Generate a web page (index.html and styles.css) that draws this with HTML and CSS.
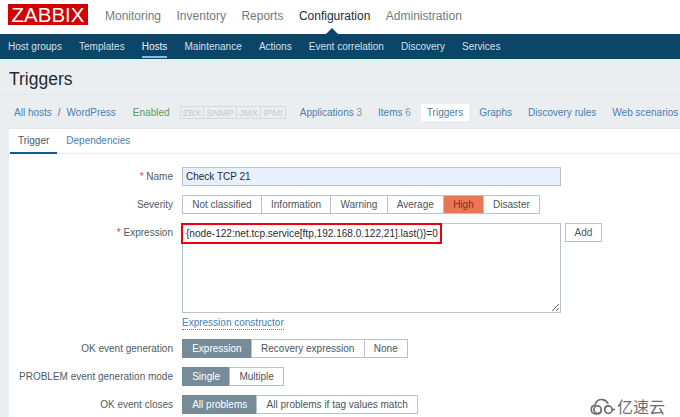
FILE: index.html
```html
<!DOCTYPE html>
<html lang="en">
<head>
    <meta charset="UTF-8">
    <meta name="viewport" content="width=device-width, initial-scale=1.0">
    <title>Triggers</title>
    <link rel="stylesheet" href="styles.css">
</head>
<body>
    <header class="top-nav">
        <div class="logo">ZABBIX</div>
        <a>Monitoring</a>
        <a>Inventory</a>
        <a>Reports</a>
        <a class="current">Configuration</a>
        <a>Administration</a>
    </header>
    <nav class="sub-nav">
        <a>Host groups</a>
        <a>Templates</a>
        <a class="current">Hosts</a>
        <a>Maintenance</a>
        <a>Actions</a>
        <a>Event correlation</a>
        <a>Discovery</a>
        <a>Services</a>
    </nav>
    <main class="page">
        <h1>Triggers</h1>
        <div class="host-bar">
            <a>All hosts</a>
            <span class="slash">/</span>
            <a>WordPress</a>
            <span class="enabled">Enabled</span>
            <div class="tags">
                <span>ZBX</span><span>SNMP</span><span>JMX</span><span>IPMI</span>
            </div>
            <ul class="host-tabs">
                <li><a>Applications</a> <span class="count">3</span></li>
                <li><a>Items</a> <span class="count">6</span></li>
                <li class="active"><a>Triggers</a></li>
                <li><a>Graphs</a></li>
                <li><a>Discovery rules</a></li>
                <li><a>Web scenarios</a></li>
            </ul>
        </div>
        <section class="card">
            <div class="tabs">
                <a class="active">Trigger</a>
                <a>Dependencies</a>
            </div>
            <form class="form">
                <div class="row">
                    <label><span class="req">*</span> Name</label>
                    <input class="text-input" type="text" value="Check TCP 21">
                </div>
                <div class="row">
                    <label>Severity</label>
                    <div class="segments">
                        <span>Not classified</span><span>Information</span><span>Warning</span><span>Average</span><span class="high">High</span><span>Disaster</span>
                    </div>
                </div>
                <div class="row row-expr">
                    <label><span class="req">*</span> Expression</label>
                    <div class="expr-box">
                        <textarea readonly>{node-122:net.tcp.service[ftp,192.168.0.122,21].last()}=0</textarea>
                        <div class="red-mark"></div>
                    </div>
                    <button type="button" class="add">Add</button>
                </div>
                <div class="row row-link">
                    <label></label>
                    <a class="dotted">Expression constructor</a>
                </div>
                <div class="row">
                    <label>OK event generation</label>
                    <div class="segments">
                        <span class="on">Expression</span><span>Recovery expression</span><span>None</span>
                    </div>
                </div>
                <div class="row">
                    <label>PROBLEM event generation mode</label>
                    <div class="segments">
                        <span class="on">Single</span><span>Multiple</span>
                    </div>
                </div>
                <div class="row">
                    <label>OK event closes</label>
                    <div class="segments">
                        <span class="on">All problems</span><span>All problems if tag values match</span>
                    </div>
                </div>
            </form>
        </section>
    </main>
    <div class="watermark">
        <svg width="26" height="17" viewBox="0 0 26 17" fill="none" stroke="#6f6f6f" stroke-width="1.7">
            <path d="M7 16H5.5a4.5 4.5 0 0 1-.6-8.9C5.6 3.2 9 1 12.6 1.6c2.6.4 4.6 2 5.5 4.2"/>
            <circle cx="7.6" cy="11.6" r="3.7"/>
            <circle cx="18.4" cy="11.6" r="3.7"/>
            <path d="M11.2 11.6c0 1.4 0 4.4-3.6 4.4M14.7 11.6c0-2.4 1.5-3.7 3.7-3.7M22 11.6c1 0 3-.2 3-.2"/>
        </svg>
        <span>亿速云</span>
    </div>
</body>
</html>
```

FILE: styles.css
```css
html, body {
    margin: 0;
    padding: 0;
    height: 100%;
    overflow: hidden;
}
body {
    font-family: "Liberation Sans", Arial, sans-serif;
    font-size: 10px;
    background-color: #ebeef0;
    color: #1f2c33;
}
a {
    color: #4680b0;
    text-decoration: none;
}

/* top menu */
.top-nav {
    height: 34px;
    background-color: white;
    display: flex;
    align-items: flex-start;
    gap: 15.5px;
    padding-left: 8px;
    box-sizing: border-box;
}
.top-nav a {
    font-size: 12px;
    line-height: 32px;
    color: #6f7b82;
    white-space: nowrap;
}
.top-nav a.current {
    color: #1f2c33;
    position: relative;
}
.top-nav a.current::after {
    content: "";
    position: absolute;
    left: 27px;
    bottom: -2px;
    border-left: 6px solid transparent;
    border-right: 6px solid transparent;
    border-bottom: 6px solid #0a466a;
}
.logo {
    width: 80px;
    height: 21px;
    margin: 4px 1.5px 0 0;
    background-color: #d40000;
    color: white;
    font-size: 20.5px;
    line-height: 21px;
    text-align: center;
}

/* second menu */
.sub-nav {
    height: 25px;
    background-color: #0a466a;
    display: flex;
    gap: 17.15px;
    padding-left: 8px;
    box-sizing: border-box;
}
.sub-nav a {
    line-height: 25px;
    height: 24px;
    color: #d3e0e8;
    box-sizing: border-box;
    white-space: nowrap;
}
.sub-nav a.current {
    color: #eef4f8;
    border-bottom: 2px solid #7fc4ec;
}

.page {
    position: relative;
}
h1 {
    margin: 0;
    height: 35px;
    padding-left: 9px;
    font-size: 17.5px;
    font-weight: normal;
    line-height: 40px;
    color: #1f2c33;
    border-bottom: 1px solid #e3e7ea;
}

/* host breadcrumbs */
.host-bar {
    height: 33px;
    display: flex;
    align-items: center;
    padding: 1px 0 0 14px;
    box-sizing: border-box;
    white-space: nowrap;
}
.slash {
    margin: 0 6px;
    color: #5c6a72;
}
.enabled {
    margin-left: 17px;
    color: #5d9a55;
}
.tags {
    display: flex;
    margin-left: 10px;
    border: 1px solid #d5dadd;
    color: #c4cbcf;
    font-size: 9.5px;
    line-height: 11px;
}
.tags span {
    padding: 0 2.1px;
    border-left: 1px solid #d5dadd;
}
.tags span:first-child {
    border-left: none;
}
.host-tabs {
    display: flex;
    list-style: none;
    margin: 0 0 0 8px;
    padding: 0;
    gap: 4px;
}
.host-tabs li {
    padding: 0 6px;
    line-height: 17px;
}
.host-tabs li.active {
    background-color: white;
}
.count {
    color: #8a949a;
}

/* form card */
.card {
    margin-left: 9px;
    background-color: white;
    height: 300px;
    border-top: 1px solid #e3e7ea;
}
.tabs {
    display: flex;
    height: 25px;
    padding-left: 1px;
    border-bottom: 1px solid #eceff1;
    box-sizing: border-box;
}
.tabs a {
    padding: 0 8px;
    margin-right: 1px;
    line-height: 23px;
    height: 25px;
    box-sizing: border-box;
}
.tabs a.active {
    color: #4a5a62;
    border-bottom: 2px solid #0a5c8a;
}
.form {
    padding-top: 13px;
}
.row {
    display: flex;
    align-items: flex-start;
    margin-bottom: 9px;
}
.row label {
    width: 164px;
    margin-right: 9px;
    flex-shrink: 0;
    text-align: right;
    line-height: 19px;
    color: #4e5c64;
    white-space: nowrap;
}
.req {
    color: #dc4a3c;
}
.text-input {
    width: 379px;
    height: 19px;
    box-sizing: border-box;
    margin: 0;
    padding: 0 3px;
    border: 1px solid #b8c4c9;
    background-color: #e8f0fe;
    font-family: inherit;
    font-size: 10px;
    color: #1f2c33;
    outline: none;
}
.segments {
    display: flex;
    white-space: nowrap;
}
.segments span {
    height: 19px;
    line-height: 17px;
    padding: 0 9.2px;
    box-sizing: border-box;
    border: 1px solid #b8c4c9;
    margin-left: -1px;
    background-color: white;
    color: #4a565c;
}
.segments span:first-child {
    margin-left: 0;
}
.segments .high {
    background-color: #e97659;
    color: #7d3324;
}
.segments .on {
    background-color: #768d99;
    border-color: #768d99;
    color: white;
}
.row-expr {
    margin-bottom: 4px;
}
.expr-box {
    position: relative;
    width: 379px;
    height: 90px;
}
.expr-box textarea {
    display: block;
    width: 100%;
    height: 100%;
    box-sizing: border-box;
    margin: 0;
    padding: 3px;
    border: 1px solid #b8c4c9;
    background-color: white;
    font-family: inherit;
    font-size: 10.08px;
    line-height: 13px;
    color: #1f2c33;
    outline: none;
}
.red-mark {
    position: absolute;
    left: -1px;
    top: 0;
    width: 261px;
    height: 21px;
    box-sizing: border-box;
    border: 2px solid #ea0010;
}
.add {
    margin: 0 0 0 4px;
    width: 37px;
    height: 19px;
    padding: 0;
    border: 1px solid #b8c4c9;
    background-color: white;
    font-family: inherit;
    font-size: 10px;
    color: #4a565c;
}
.row-link {
    margin-bottom: 6px;
    height: 16px;
}
.dotted {
    line-height: 12px;
    border-bottom: 1px dotted #4680b0;
}
.watermark {
    position: absolute;
    left: 590px;
    top: 396px;
    display: flex;
    align-items: center;
    gap: 1px;
    color: #6f6f6f;
    font-family: "Noto Sans CJK SC", sans-serif;
    font-size: 16px;
    line-height: 20px;
}
```
